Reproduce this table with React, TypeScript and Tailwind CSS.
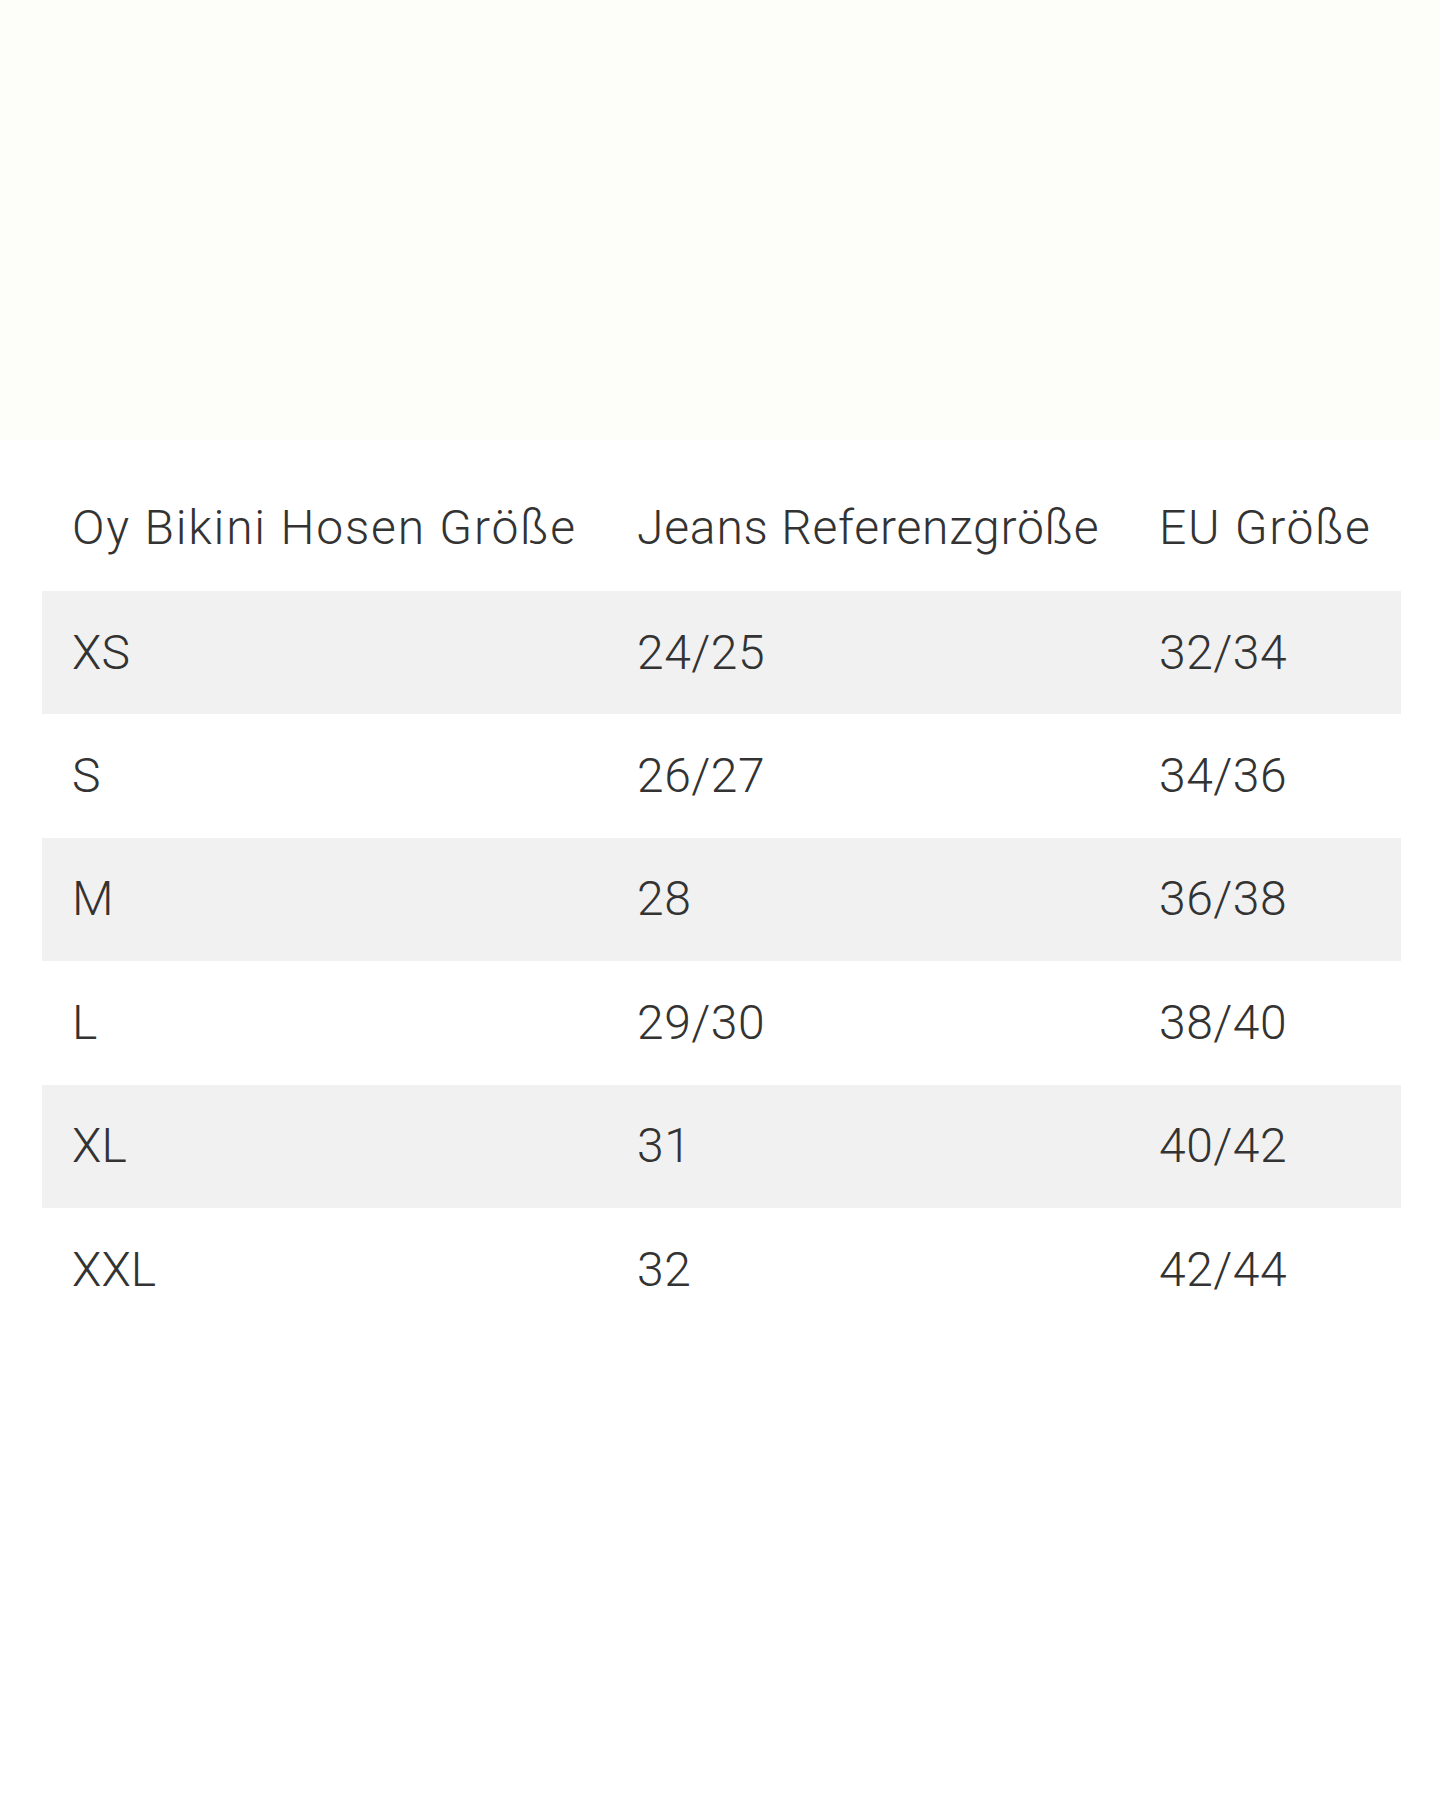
import React from "react";

const rows = [
  ["XS", "24/25", "32/34"],
  ["S", "26/27", "34/36"],
  ["M", "28", "36/38"],
  ["L", "29/30", "38/40"],
  ["XL", "31", "40/42"],
  ["XXL", "32", "42/44"],
];

export default function App() {
  return (
    <div className="w-[1440px] h-[1800px] bg-white text-[#333333] font-['Roboto',sans-serif] font-light">
      <div className="h-[440px] bg-[#fdfdfa]" />
      <div className="px-[42px] pr-[39px]">
        <div className="grid grid-cols-[565px_522px_1fr] h-[151px] items-center pt-[24px] text-[48px] leading-none">
          <div className="pl-[30px] tracking-[1.8px]">Oy Bikini Hosen Größe</div>
          <div className="pl-[30px] tracking-[0.8px]">Jeans Referenzgröße</div>
          <div className="pl-[30px] tracking-[1.7px]">EU Größe</div>
        </div>
        {rows.map((r, i) => (
          <div
            key={r[0]}
            className={
              i % 2 === 0
                ? "grid grid-cols-[565px_522px_1fr] h-[123.4px] items-center bg-[#f1f1f1] text-[48px] leading-none"
                : "grid grid-cols-[565px_522px_1fr] h-[123.4px] items-center bg-white text-[48px] leading-none"
            }
          >
            <div className="pl-[30px]">{r[0]}</div>
            <div className="pl-[30px] tracking-[0.5px]">{r[1]}</div>
            <div className="pl-[30px] tracking-[0.5px]">{r[2]}</div>
          </div>
        ))}
      </div>
    </div>
  );
}
